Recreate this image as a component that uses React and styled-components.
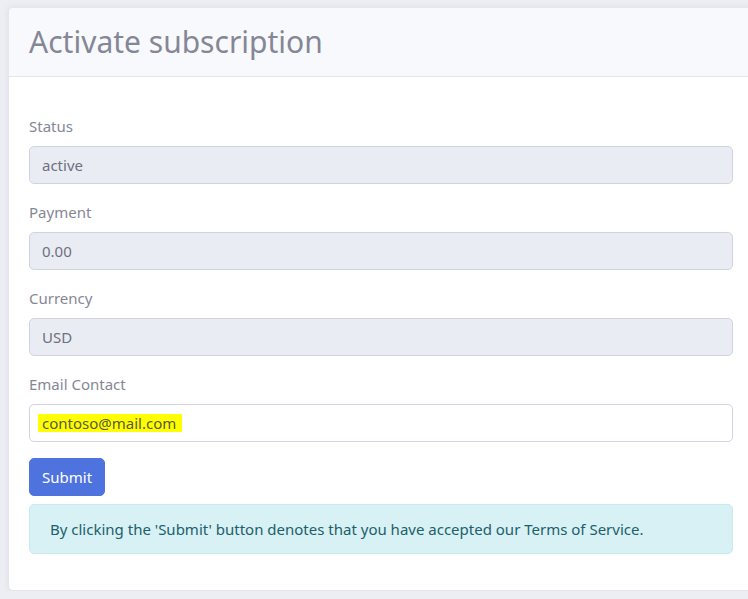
import React from 'react';
import styled, { createGlobalStyle } from 'styled-components';

const GlobalStyle = createGlobalStyle`
  html, body {
    margin: 0;
    padding: 0;
    overflow: hidden;
    background: #eceef3;
  }
  body {
    font-family: 'Segoe UI', 'Noto Sans', 'Open Sans', sans-serif;
    font-size: 16px;
    line-height: 1.5;
    color: #858796;
  }
`;

const Page = styled.div`
  padding: 7px 0 0 8px;
`;

const Card = styled.div`
  width: 744px;
  background: #fff;
  border: 1px solid #e3e6f0;
  border-radius: 5px;
  box-shadow: 0 0 6px rgba(58, 59, 69, 0.08);
  overflow: hidden;
`;

const CardHeader = styled.div`
  background: #f8f9fc;
  border-bottom: 1px solid #e3e6f0;
  padding: 15px 20px 15px;
`;

const Title = styled.h1`
  margin: 0;
  font-size: 30px;
  font-weight: 400;
  line-height: 38px;
  color: #858796;
`;

const CardBody = styled.div`
  padding: 37px 20px 36px;
`;

const FormGroup = styled.div`
  margin-bottom: 16px;
`;

const Label = styled.label`
  display: block;
  margin-bottom: 8px;
  font-size: 15px;
  line-height: 24px;
`;

const Input = styled.div`
  box-sizing: border-box;
  height: 38px;
  padding: 6px 12px;
  border: 1px solid #d1d3e2;
  border-radius: 5px;
  background: ${(p) => (p.$disabled ? '#eaecf4' : '#fff')};
  color: #6e707e;
  font-size: 15px;
  line-height: 24px;
  display: flex;
  align-items: center;
`;

const Highlight = styled.span`
  background: #ffff00;
  color: #5a5a3c;
  padding: 0 6px 0 4px;
  margin-left: -4px;
  line-height: 18px;
`;

const Button = styled.button`
  box-sizing: border-box;
  height: 38px;
  padding: 0 12px;
  border: 1px solid #4e73df;
  border-radius: 5px;
  background: #4e73df;
  color: #fff;
  font-family: inherit;
  font-size: 15px;
  line-height: 24px;
  margin-bottom: 8px;
  display: block;
`;

const Alert = styled.div`
  box-sizing: border-box;
  padding: 12px 20px;
  border: 1px solid #c7ebf1;
  border-radius: 5px;
  background: #d7f1f5;
  color: #1c606a;
  font-size: 15px;
  line-height: 24px;
`;

const fields = [
  { label: 'Status', value: 'active' },
  { label: 'Payment', value: '0.00' },
  { label: 'Currency', value: 'USD' },
];

export default function App() {
  return (
    <>
      <GlobalStyle />
      <Page>
        <Card>
          <CardHeader>
            <Title>Activate subscription</Title>
          </CardHeader>
          <CardBody>
            {fields.map((f) => (
              <FormGroup key={f.label}>
                <Label>{f.label}</Label>
                <Input $disabled>{f.value}</Input>
              </FormGroup>
            ))}
            <FormGroup>
              <Label>Email Contact</Label>
              <Input>
                <Highlight>contoso@mail.com</Highlight>
              </Input>
            </FormGroup>
            <Button>Submit</Button>
            <Alert>
              By clicking the 'Submit' button denotes that you have accepted our Terms of Service.
            </Alert>
          </CardBody>
        </Card>
      </Page>
    </>
  );
}
